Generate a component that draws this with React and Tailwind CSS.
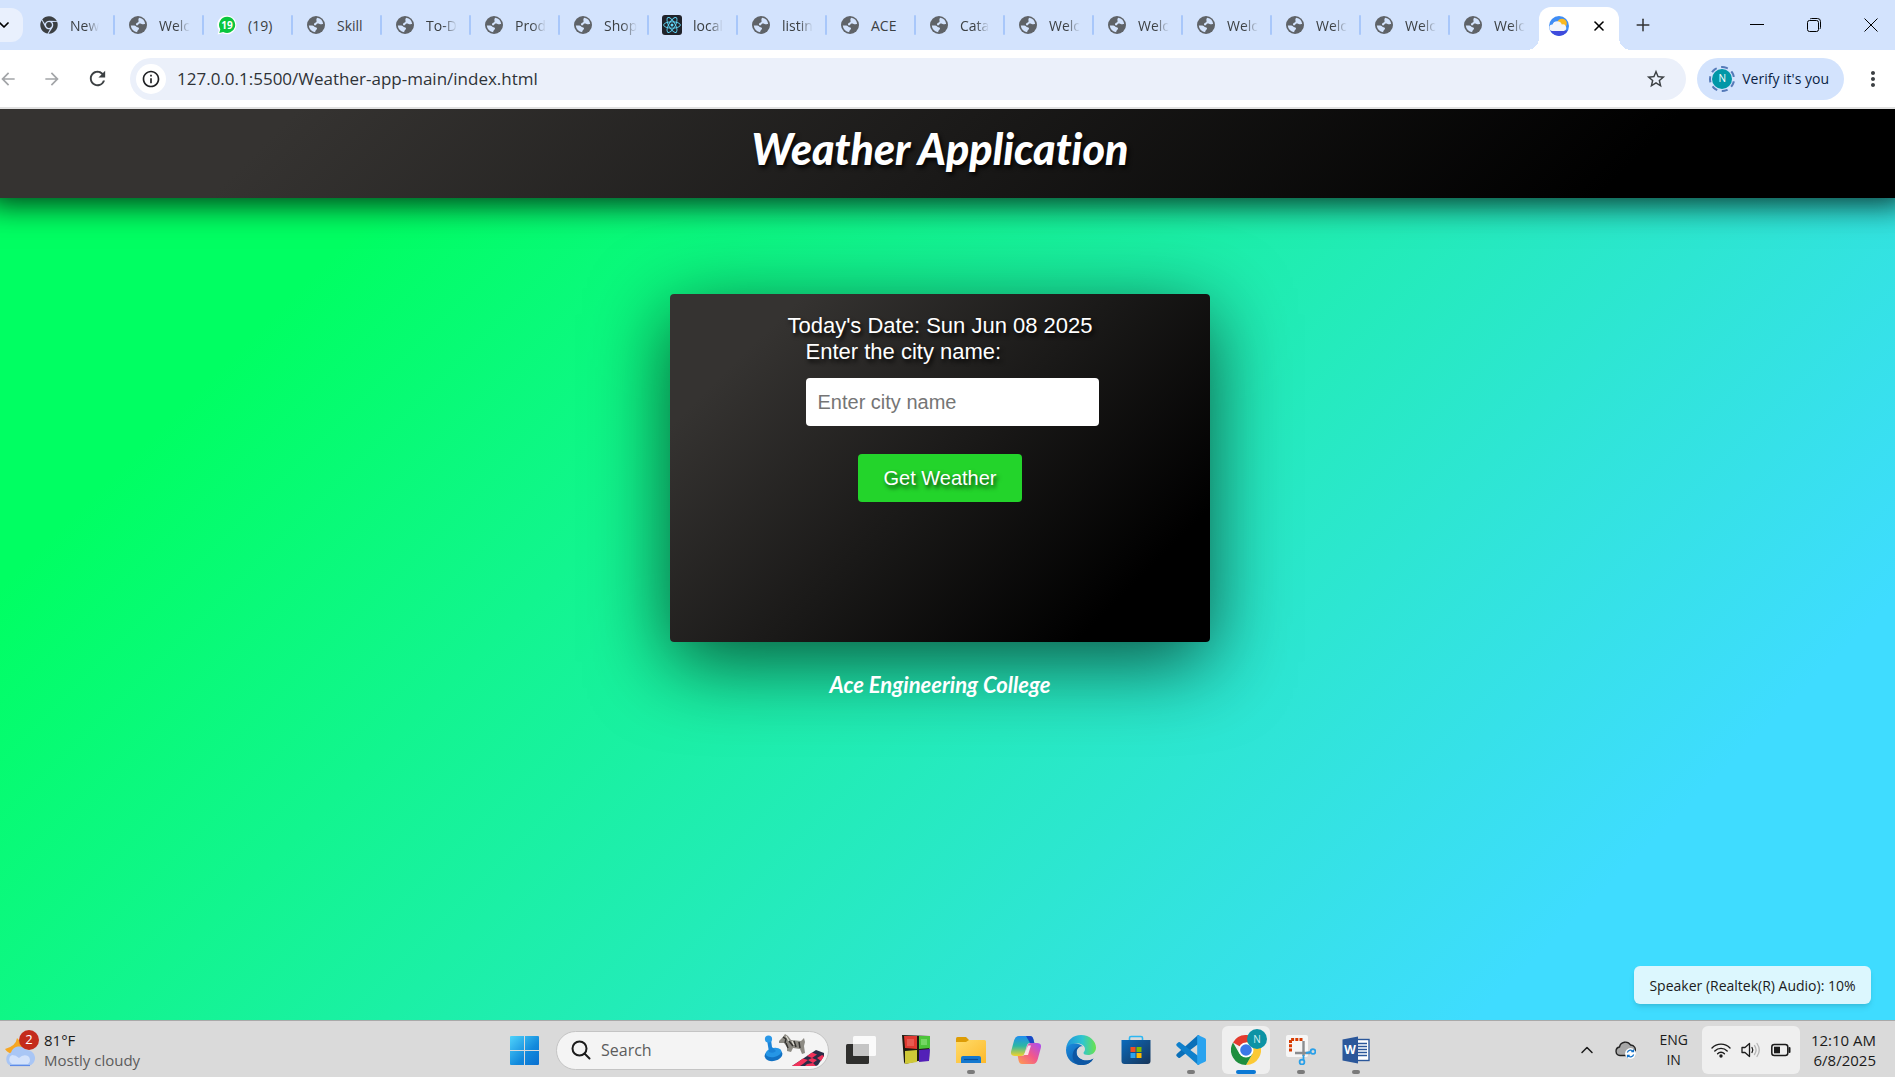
import { MdStarBorder, MdRefresh, MdArrowBack, MdArrowForward, MdInfoOutline, MdMoreVert } from "react-icons/md";
import { FaChrome } from "react-icons/fa";
import { ChevronDown, ChevronUp, X, Plus } from "lucide-react";

const tabs = [
  ["chrome", "New"],
  ["globe", "Welc"],
  ["chat", "(19)"],
  ["globe", "Skill"],
  ["globe", "To-D"],
  ["globe", "Prod"],
  ["globe", "Shop"],
  ["react", "local"],
  ["globe", "listin"],
  ["globe", "ACE"],
  ["globe", "Cata"],
  ["globe", "Welc"],
  ["globe", "Welc"],
  ["globe", "Welc"],
  ["globe", "Welc"],
  ["globe", "Welc"],
  ["globe", "Welc"],
];

const fadedLabels = ["New", "Welc", "To-D", "Prod", "Shop", "local", "listin", "Cata"];

function GlobeIcon() {
  return (
    <svg viewBox="0 0 18 18" className="size-[18px]">
      <circle cx="9" cy="9" r="9" fill="#5f6368" />
      <path d="M10.200 1.800A7.300 7.300 0 0 1 16.200 8.200C15.400 7.600 14.500 8.400 13.300 8.200 12 8 11.600 7.200 10.400 7.600 9.200 8 9.600 9.400 8.200 9.400 7 9.400 6.600 8.200 7.400 7.300 8.200 6.400 9.600 6.600 9.600 5.300 9.600 4.200 8.800 3.400 10.200 1.800z" fill="#d3e3fd" />
      <path d="M1.800 9.400H5.200C6.800 9.400 7.200 11 8.600 11.200 9.800 11.400 10.400 12.200 9.800 13.200 9.200 14.200 8.200 14.200 8.200 16.200A7.300 7.300 0 0 1 1.800 9.400z" fill="#d3e3fd" />
    </svg>
  );
}

function ReactIcon() {
  return (
    <svg viewBox="0 0 20 20" className="size-5">
      <rect width="20" height="20" rx="3" fill="#20232a" />
      <g fill="none" stroke="#61dafb" strokeWidth="0.9">
        <ellipse cx="10" cy="10" rx="8.4" ry="3.2" />
        <ellipse cx="10" cy="10" rx="8.4" ry="3.2" transform="rotate(60 10 10)" />
        <ellipse cx="10" cy="10" rx="8.4" ry="3.2" transform="rotate(120 10 10)" />
      </g>
      <circle cx="10" cy="10" r="1.5" fill="#61dafb" />
    </svg>
  );
}

function ChatIcon() {
  return (
    <span className="relative grid size-5 place-items-center">
      <svg viewBox="0 0 20 20" className="absolute inset-0 size-5">
        <path d="M10 .5a9.4 9.4 0 1 1-4.3 17.8L.6 19.6 1.8 15A9.4 9.4 0 0 1 10 .5z" fill="#fff" />
        <path d="M10.2 1.8a8.1 8.1 0 1 1-4 15.2l-3.900 1 1-3.800A8.100 8.100 0 0 1 10.200 1.800z" fill="#0ac63e" />
      </svg>
      <span className="relative text-[10px] leading-none font-bold text-white">19</span>
    </span>
  );
}

function TabIcon({ kind }) {
  if (kind === "react") return <ReactIcon />;
  if (kind === "chat") return <ChatIcon />;
  if (kind === "chrome") return <FaChrome className="size-[18px] text-[#3c4043]" />;
  return <GlobeIcon />;
}

function WeatherFavicon() {
  return (
    <svg viewBox="0 0 20 20" className="size-5">
      <defs>
        <clipPath id="fav"><circle cx="10" cy="10" r="10" /></clipPath>
      </defs>
      <g clipPath="url(#fav)">
        <rect width="20" height="20" fill="#3f8df5" />
        <rect y="14.5" width="20" height="6" fill="#3f4bdc" />
        <circle cx="13" cy="7.500" r="4.800" fill="#fbb91f" />
        <path d="M3.500 15a3.300 3.300 0 0 1 0-6.600A5 5 0 0 1 12.800 8.500a3.300 3.300 0 0 1 2 6.500z" fill="#f2f5fa" />
      </g>
    </svg>
  );
}

function TabStrip() {
  return (
    <div className="flex h-[50px] items-center overflow-hidden bg-[#d3e3fd] text-[#3c4043]">
      <button aria-label="Search tabs" className="flex h-[34px] w-[23px] shrink-0 items-center rounded-r-xl bg-[#e9f0fd] text-black">
        <ChevronDown className="-ml-1 size-4" strokeWidth={2.6} />
      </button>
      <div className="ml-[3px] flex" role="tablist">
        {tabs.map(([kind, label], i) => (
          <button key={i} role="tab" className="flex h-5 w-[89px] items-center">
            <span className="ml-3 grid w-[22px] place-items-center"><TabIcon kind={kind} /></span>
            <span
              className={
                "ml-2.5 text-left text-[14px] whitespace-nowrap " +
                (fadedLabels.includes(label) ? "mask-[linear-gradient(to_right,black_55%,transparent)]" : "")
              }
            >
              {label}
            </span>
            <span className={i === tabs.length - 1 ? "hidden" : "ml-auto h-5 w-0.5 rounded-full bg-[#a8c7fa]"} />
          </button>
        ))}
      </div>
      <div className="flex items-end self-end">
        <span className="-ml-3 size-3 bg-[radial-gradient(circle_at_top_left,transparent_12px,white_12px)]" />
        <div role="tab" className="flex h-[43px] w-20 items-center justify-between rounded-t-xl bg-white pr-3 pb-1.5 pl-2.5">
          <WeatherFavicon />
          <button aria-label="Close tab" className="text-black"><X className="size-4" strokeWidth={2.4} /></button>
        </div>
        <span className="size-3 bg-[radial-gradient(circle_at_top_right,transparent_12px,white_12px)]" />
      </div>
      <button aria-label="New tab" className="ml-0.5 text-[#333]"><Plus className="size-5" strokeWidth={1.8} /></button>
      <div className="ml-auto flex items-center gap-[43px] pr-[17px] text-black">
        <button aria-label="Minimize">
          <svg viewBox="0 0 14 14" className="size-3.5"><path d="M0 6.500h14" stroke="currentColor" /></svg>
        </button>
        <button aria-label="Restore">
          <svg viewBox="0 0 14 14" className="size-3.5" fill="none" stroke="currentColor">
            <rect x=".5" y="2.500" width="11" height="11" rx="2" />
            <path d="M3 1.200Q3.400.5 4.500.5h6a3 3 0 0 1 3 3v6q0 1-.8 1.600" />
          </svg>
        </button>
        <button aria-label="Close">
          <svg viewBox="0 0 14 14" className="size-3.5"><path d="M.5.5l13 13M13.500.5l-13 13" stroke="currentColor" /></svg>
        </button>
      </div>
    </div>
  );
}

function Toolbar() {
  return (
    <div className="flex h-[59px] items-center border-b-2 border-[#e1e1e1] bg-white text-[#3c4043]">
      <button aria-label="Back" className="-ml-0.5 text-[#a3a5a8]"><MdArrowBack className="size-5" /></button>
      <button aria-label="Forward" className="ml-6 text-[#a3a5a8]"><MdArrowForward className="size-5" /></button>
      <button aria-label="Reload" className="ml-6"><MdRefresh className="size-[23px]" /></button>
      <div className="ml-[21px] flex h-[42px] flex-1 items-center rounded-full bg-[#ebf0fa] pr-[19px] pl-1.5">
        <button aria-label="Site information" className="grid size-[30px] place-items-center rounded-full bg-white text-[#202124]">
          <MdInfoOutline className="size-5" />
        </button>
        <input
          aria-label="Address"
          defaultValue="127.0.0.1:5500/Weather-app-main/index.html"
          className="ml-[11px] flex-1 bg-transparent text-[17px] text-[#2f3337] outline-none"
        />
        <button aria-label="Bookmark this page"><MdStarBorder className="size-[22px]" /></button>
      </div>
      <button className="ml-[11px] flex h-[42px] items-center rounded-full bg-[#d3e3fd] pr-[15px] pl-3 text-[14px] text-[#0b1f45]">
        <span className="mr-[7px] grid size-[26px] place-items-center rounded-full border-2 border-dashed border-[#5479b8]">
          <span className="grid size-5 place-items-center rounded-full bg-[#0097a7] text-[10px] text-white">N</span>
        </span>
        Verify it's you
      </button>
      <button aria-label="Menu" className="mr-2.5 ml-[17px]"><MdMoreVert className="size-6" /></button>
    </div>
  );
}

function WeatherPage() {
  return (
    <main className="relative flex-1 overflow-hidden bg-[linear-gradient(135deg,#00ff62_17%,#3fdcff_85%)] font-['Liberation_Sans',Arial,sans-serif] text-white">
      <header className="flex h-[89px] items-start justify-center bg-[linear-gradient(135deg,#353331_15%,#000_85%)] pt-3.5 pr-[15px] shadow-[0_-8px_30px_14px_rgba(0,0,0,0.8)]">
        <h1 className="font-[Lato,sans-serif] text-[43px] leading-[52px] font-black italic text-shadow-[2px_3px_4px_rgba(0,0,0,0.9)] [font-variant-ligatures:none]">
          Weather Application
        </h1>
      </header>
      <div className="flex flex-col items-center pt-24 pr-[15px]">
        <section className="flex h-[348px] w-[540px] flex-col items-center rounded bg-[linear-gradient(135deg,#353331_15%,#000_85%)] pt-[19px] shadow-[0_20px_80px_rgba(0,0,0,0.65)]">
          <p className="text-[22px] leading-[26px] text-shadow-[2px_3px_4px_rgba(0,0,0,0.9)]">Today's Date: Sun Jun 08 2025</p>
          <div className="ml-6 flex w-[293px] flex-col">
            <label htmlFor="city" className="text-[22px] leading-[26px] text-shadow-[2px_3px_4px_rgba(0,0,0,0.9)]">Enter the city name:</label>
            <input
              id="city"
              placeholder="Enter city name"
              className="mt-[13px] h-12 rounded bg-white px-3 text-[20px] text-black placeholder:text-[#757575]"
            />
          </div>
          <button className="mt-7 h-12 w-[164px] rounded-sm bg-[#23d42b] text-[20px] text-shadow-[2px_3px_4px_rgba(0,0,0,0.7)]">Get Weather</button>
        </section>
        <footer className="mt-[27px] font-[Lato,sans-serif] text-[22px] leading-8 font-bold italic">Ace Engineering College</footer>
      </div>
      <div role="tooltip" className="absolute right-6 bottom-4 flex h-[38px] w-[237px] items-center justify-center rounded-md bg-[#dcf7fe] font-['Open_Sans',sans-serif] text-[14px] text-[#1b1b1b] shadow-md">
        Speaker (Realtek(R) Audio): 10%
      </div>
    </main>
  );
}

function Windows() {
  return (
    <svg viewBox="0 0 29 29" className="size-[29px]">
      <defs>
        <linearGradient id="win" x1="0" y1="0" x2="1" y2="1">
          <stop offset="0" stopColor="#4fd3fb" /><stop offset=".6" stopColor="#1289dc" /><stop offset="1" stopColor="#0a6fd0" />
        </linearGradient>
      </defs>
      <path d="M1 0h13v14H0V1a1 1 0 0 1 1-1zM15 0h13a1 1 0 0 1 1 1v13H15zM0 15h14v14H1a1 1 0 0 1-1-1zM15 15h14v13a1 1 0 0 1-1 1H15z" fill="url(#win)" />
    </svg>
  );
}

function GamePieces() {
  return (
    <svg viewBox="0 0 60 36" className="h-9 w-[60px]">
      <path d="M28 34l24-16 8 3v3l-6 9q-1 1-3 1z" fill="#2b2c47" />
      <path d="M34 30l5-3.500 5 1.500-5 4zM43 24l5-3.500 5 2-5 3.500zM44 28l4-2 5 2-4 3zM28 34l6-4 5 2-3 2zM43 32l6-1 3 3h-11zM53 26l5-3 2 1-3 5z" fill="#f0325a" />
      <ellipse cx="9.500" cy="23" rx="9" ry="6" fill="#1272c4" transform="rotate(-12 9.500 23)" />
      <ellipse cx="9.500" cy="20.500" rx="8" ry="4.500" fill="#2596e6" transform="rotate(-12 9.500 20.500)" />
      <path d="M3 8h4l1 7 4 4q-3 3-7 1z" fill="#1a83d8" />
      <circle cx="4.500" cy="7" r="3.600" fill="#2a98e8" />
      <path d="M15 9l4-4 2-3 3 2 3 4 10 1 3-3 1 4-1 4 1 7-3 1-2-5-7-1-2 4-4-1 0-4-3-4-5 0z" fill="#8d8b84" />
      <path d="M19 5l3 2-1 4M25 9l4 5M30 9l2 6M35 10l1 6M22 11l2 5" fill="none" stroke="#33322f" strokeWidth="1.500" />
      <path d="M22 4l3 5M28 9l2 4" stroke="#dedcd3" strokeWidth="1.200" />
    </svg>
  );
}

function TaskView() {
  return (
    <svg viewBox="0 0 30 30" className="size-[30px]">
      <rect y="9" width="23" height="20" rx="1.500" fill="#2f2f2d" />
      <rect x="7" y="1" width="23" height="20" rx="1.500" fill="#fff" fillOpacity=".85" />
      <path d="M7 9h16v12H8.500A1.500 1.500 0 0 1 7 19.500z" fill="#c5c5c5" />
    </svg>
  );
}

function ColorBlocks() {
  return (
    <svg viewBox="0 0 30 30" className="size-[30px]">
      <path d="M1 0l28 1-1 24-11 1-13 3-1-2z" fill="#1d1a10" />
      <path d="M3 1h13v13l-12-1z" fill="#df3a31" /><path d="M18 1h11v12l-11 1z" fill="#4cc43a" />
      <path d="M4 16l12-1v12l-12 2z" fill="#cfc838" /><path d="M18 15l11-1-1 12-10 1z" fill="#5320b8" />
      <path d="M6 4h7v7H6z" fill="#f07a70" opacity=".5" /><path d="M20 4h6v6h-6z" fill="#9be88c" opacity=".5" />
    </svg>
  );
}

function Explorer() {
  return (
    <svg viewBox="0 0 30 30" className="size-[30px]">
      <defs>
        <linearGradient id="fold" x1="0" y1="0" x2="1" y2="1"><stop stopColor="#ffdb6a" /><stop offset="1" stopColor="#fdb92a" /></linearGradient>
      </defs>
      <path d="M0 3.500Q0 2 1.500 2H10l3 3v5H0z" fill="#dd9c05" />
      <path d="M0 7h10l3-2h15.500A1.500 1.500 0 0 1 30 6.500V28H0z" fill="url(#fold)" />
      <path d="M5 28v-5q0-2 2-2h16q2 0 2 2v5z" fill="#1478cf" />
      <path d="M8 24.500h14" stroke="#0a4f99" strokeWidth="1.200" />
    </svg>
  );
}

function Copilot() {
  return (
    <svg viewBox="0 0 30 30" className="size-[30px]">
      <defs>
        <linearGradient id="cpa" x1="0" y1="0" x2="0" y2="1"><stop stopColor="#1f8df0" /><stop offset=".5" stopColor="#2cb7a4" /><stop offset="1" stopColor="#f2d22c" /></linearGradient>
        <linearGradient id="cpb" x1="1" y1="0" x2="0" y2="1"><stop stopColor="#a64df5" /><stop offset=".5" stopColor="#f2588a" /><stop offset="1" stopColor="#ffa04d" /></linearGradient>
      </defs>
      <path d="M8 1h11q2.500 0 3.300 3l1 4H19q-2.500 0-3.300 3l-2 7q-1 3-3.700 3H4q-5 0-3.800-5l3-11Q4.500 1 8 1z" fill="url(#cpa)" />
      <path d="M15 1h4q2.500 0 3.300 3l1 4H19z" fill="#1a47c4" />
      <path d="M22 29H11q-2.500 0-3.300-3l-1-5H11q2.500 0 3.300-3l2-7q1-3 3.700-3h6q5 0 3.800 5l-3 11q-1.300 5-4.800 5z" fill="url(#cpb)" />
      <path d="M17 10.500h3l-3 9.500h-4z" fill="#fff" fillOpacity=".8" />
    </svg>
  );
}

function Edge() {
  return (
    <svg viewBox="0 0 30 30" className="size-[30px]">
      <defs>
        <linearGradient id="eda" x1="0" y1=".3" x2="1" y2=".3"><stop stopColor="#1f93dc" /><stop offset=".55" stopColor="#2fc5d0" /><stop offset="1" stopColor="#6ae34c" /></linearGradient>
        <linearGradient id="edb" x1="0" y1="0" x2="1" y2="1"><stop stopColor="#1a8ce0" /><stop offset="1" stopColor="#0a4a95" /></linearGradient>
      </defs>
      <path d="M0 14C1 5 7 0 15 0c9 0 15 6.500 15 12.500 0 5-4 7.500-8 7.500-3 0-4.500-1-4.500-2s1.500-1.500 1.500-4c0-3-3-5.500-7.500-5.500C6 8.500 1.500 11 0 14z" fill="url(#eda)" />
      <path d="M0 15c0-4 5-7 10-6.500 3 .3 5.500 1.500 7 3-2.500-1-6.500 1-6.500 5.500 0 6 6 9 11 8.500 3-.3 4.500-1 6-2C25 28 20.500 30 15 30 6.500 30 0 23.500 0 15z" fill="url(#edb)" />
      <path d="M13 29.800C8 28 5.500 23 7 18c1-4 4-6.500 8-7-3 1.500-4.500 3.500-4.500 6.500 0 5.500 6 8.500 11 8 3-.3 4.500-1 6-2-3 5-8.500 7.500-14.500 6.300z" fill="#0d57a4" />
    </svg>
  );
}

function Store() {
  return (
    <svg viewBox="0 0 30 30" className="size-[30px]">
      <defs>
        <linearGradient id="sto" x1="0" y1="0" x2="1" y2="1"><stop stopColor="#0c6bbd" /><stop offset="1" stopColor="#173559" /></linearGradient>
      </defs>
      <path d="M8.500 6V3q0-1.500 1.500-1.500h10q1.500 0 1.500 1.500v3" fill="none" stroke="#2eb7f2" strokeWidth="1.600" />
      <path d="M.5 5h29v21q0 3-3 3h-23q-3 0-3-3z" fill="url(#sto)" />
      <path d="M9.500 12h5v5h-5z" fill="#f25022" /><path d="M15.500 12h5v5h-5z" fill="#7fba00" />
      <path d="M9.500 18h5v5h-5z" fill="#2ba4ee" /><path d="M15.500 18h5v5h-5z" fill="#ffb900" />
    </svg>
  );
}

function VSCode() {
  return (
    <svg viewBox="0 0 30 30" className="size-[30px]">
      <path d="M1 18.800L21.500.4q.8-.6 1.700-.2v8L4 22.700q-.8.600-1.600 0L.7 21.200q-1-1.200.3-2.400z" fill="#0a6fb8" />
      <path d="M1 11.200L21.500 29.600q.8.600 1.700.2v-8L4 7.300q-.8-.6-1.600 0L.7 8.800q-1 1.200.3 2.400z" fill="#0f80cc" />
      <path d="M22 0l7 3.200q1 .5 1 1.600v20.400q0 1.100-1 1.600L22 30q-.8-.1-.8-1.500v-27Q21.200.1 22 0z" fill="#2aa3ef" />
    </svg>
  );
}

function Chrome() {
  return (
    <span className="relative">
      <svg viewBox="0 0 30 30" className="size-[30px]">
        <path d="M15 15L2 7.500A15 15 0 0 1 28 7.500H15z" fill="#e33b2e" />
        <path d="M15 15V7.500h13A15 15 0 0 1 15 30l6.500-11.300z" fill="#fcc934" />
        <path d="M15 15l6.500 3.700L15 30A15 15 0 0 1 2 7.500l6.500 11.200z" fill="#1e8e3e" />
        <circle cx="15" cy="15" r="7.500" fill="#fff" /><circle cx="15" cy="15" r="5.800" fill="#3b78e7" />
      </svg>
      <span className="absolute -top-1.5 -right-1.5 grid size-5 place-items-center rounded-full bg-[#0d93a5] text-[10px] text-[#d3eff2]">N</span>
    </span>
  );
}

function Snip() {
  return (
    <svg viewBox="0 0 30 30" className="size-[30px]">
      <rect width="22" height="22" rx="2" fill="#f6f6f6" />
      <path d="M4.500 16.500V4.500h12" fill="none" stroke="#d83b01" strokeWidth="3" strokeDasharray="3 1.200" />
      <path d="M17.500 6v15M9 18h15" stroke="#8a8d90" strokeWidth="2.400" />
      <circle cx="27" cy="16.500" r="2.400" fill="none" stroke="#2ba0e8" strokeWidth="1.800" />
      <circle cx="16" cy="27" r="2.400" fill="none" stroke="#2ba0e8" strokeWidth="1.800" />
      <path d="M17.500 20v5M20 18l5-1" stroke="#2ba0e8" strokeWidth="1.800" />
    </svg>
  );
}

function Word() {
  return (
    <span className="relative grid size-[30px] place-items-center">
      <svg viewBox="0 0 30 30" className="absolute inset-0 size-[30px]">
        <rect x="14" y="4.500" width="14" height="21" fill="#fff" stroke="#2b579a" strokeWidth="1.400" />
        <path d="M17 8.500h9M17 11.500h9M17 14.500h9M17 17.500h9M17 20.500h9" stroke="#2b579a" strokeWidth="1.500" />
        <path d="M1.500 4.500L17 1.500v27l-15.500-3z" fill="#2b579a" />
      </svg>
      <span className="relative mr-3 text-[12px] leading-none font-bold text-white">W</span>
    </span>
  );
}

const apps = [
  ["Task view", TaskView, ""],
  ["Blocks", ColorBlocks, ""],
  ["File Explorer", Explorer, "dot"],
  ["Copilot", Copilot, ""],
  ["Edge", Edge, ""],
  ["Store", Store, ""],
  ["Visual Studio Code", VSCode, "dot"],
  ["Chrome", Chrome, "active"],
  ["Snipping Tool", Snip, "dot"],
  ["Word", Word, "dot"],
];

function Taskbar() {
  return (
    <div className="grid h-[57px] grid-cols-[1fr_auto_1fr] items-center border-t border-[#a9a9a9] bg-[#dadada] pt-0.5 text-[15px] text-[#1b1b1b]">
      <button className="flex items-center gap-[9px] pl-[5px] text-left">
        <span className="relative">
          <svg viewBox="0 0 30 36" className="h-9 w-[30px]">
            <path d="M12 6q-1 8-12 11 3 5 8 4l9-5V8q-3 1-5-2z" fill="#f6a623" />
            <path d="M7 34a7 7 0 0 1-1-13.500A8.500 8.500 0 0 1 21 18a8 8 0 0 1 2 16z" fill="#a9c6f5" />
            <path d="M7 32a5 5 0 0 1 0-9q4 0 7 3 4-4 9-2a5 5 0 0 1 0 8z" fill="#d3e2fb" />
            <path d="M5 33.500h20" stroke="#5d8be8" strokeWidth="1.200" />
          </svg>
          <span className="absolute -top-0.5 -right-1 grid size-5 place-items-center rounded-full bg-[#c42b1c] text-[13px] text-white">2</span>
        </span>
        <span className="leading-5">
          81°F<br /><span className="text-[#5c5c5c]">Mostly cloudy</span>
        </span>
      </button>
      <div className="mr-[15px] flex items-center">
        <button aria-label="Start" className="grid size-12 place-items-center"><Windows /></button>
        <label className="mx-2 flex h-[39px] w-[273px] items-center rounded-full border border-[#c4c4c4] bg-[#f4f4f4] pr-1 pl-3.5">
          <svg viewBox="0 0 20 20" className="size-5 shrink-0" fill="none" stroke="#1b1b1b" strokeWidth="2">
            <circle cx="8.500" cy="8.500" r="7" /><path d="M13.500 13.500l5 5" strokeLinecap="round" />
          </svg>
          <input aria-label="Search" placeholder="Search" className="ml-2.5 w-0 flex-1 text-[16px] placeholder:text-[#5c5c5c]" />
          <GamePieces />
        </label>
        <div className="flex gap-[7px]">
          {apps.map(([name, Icon, state]) => (
            <button
              key={name}
              aria-label={name}
              className={"relative grid size-12 place-items-center rounded-md " + (state === "active" ? "bg-[#efefef]" : "")}
            >
              <Icon />
              {state === "dot" && <span className="absolute bottom-0 h-1 w-2 rounded-full bg-[#7a7a7a]" />}
              {state === "active" && <span className="absolute bottom-0 h-1 w-5 rounded-full bg-[#0a78d4]" />}
            </button>
          ))}
        </div>
      </div>
      <div className="flex items-center justify-end pr-[19px] text-center leading-5">
        <button aria-label="Show hidden icons"><ChevronUp className="size-5" strokeWidth={1.8} /></button>
        <svg viewBox="0 0 22 18" className="ml-[18px] h-[18px] w-[22px]">
          <path d="M5 14.500a4.300 4.300 0 0 1-.5-8.500A6 6 0 0 1 15.500 4a4.500 4.500 0 0 1 4 7v3.500z" fill="#a7a7a7" stroke="#222" strokeWidth="1.400" />
          <circle cx="15.500" cy="12.500" r="5.400" fill="#fff" />
          <path d="M12.300 11.500a3.400 3.400 0 0 1 6-1M18.700 13.500a3.400 3.400 0 0 1-6 1M18.500 8.500v2.200h-2.200M12.500 16.500v-2.200h2.200" fill="none" stroke="#1272c9" strokeWidth="1.200" />
        </svg>
        <button className="ml-[22px] text-[14px] leading-5">ENG<br />IN</button>
        <button aria-label="Network, volume and battery" className="ml-3.5 flex h-12 items-center gap-2.5 rounded-md bg-[#efefef] px-[9px]">
          <svg viewBox="0 0 20 16" className="h-4 w-5" fill="none" stroke="#1b1b1b" strokeWidth="1.400" strokeLinecap="round">
            <path d="M1 6a12.500 12.500 0 0 1 18 0M3.800 9a8.600 8.600 0 0 1 12.400 0M6.600 11.700a4.800 4.800 0 0 1 6.800 0" />
            <circle cx="10" cy="14" r="1" fill="#1b1b1b" />
          </svg>
          <svg viewBox="0 0 20 16" className="h-4 w-5" fill="none" stroke="#1b1b1b" strokeWidth="1.300" strokeLinejoin="round" strokeLinecap="round">
            <path d="M1 5.500h3L8.500 1.500v13L4 10.500H1zM11 5.500q1.600 2.500 0 5" />
            <path d="M13.500 3.500q3.200 4.500 0 9M16 1.500q4.500 6.500 0 13" stroke="#b5b5b5" />
          </svg>
          <svg viewBox="0 0 20 14" className="h-3.5 w-5" fill="none" stroke="#1b1b1b" strokeWidth="1.500">
            <rect x=".8" y="1.500" width="16" height="11" rx="2.500" /><path d="M3 3.700h6v6.600H3z" fill="#1b1b1b" stroke="none" />
            <path d="M18.500 5v4" strokeWidth="2" strokeLinecap="round" />
          </svg>
        </button>
        <button className="ml-[11px] text-right">12:10 AM<br />6/8/2025</button>
      </div>
    </div>
  );
}

export default function App() {
  return (
    <div className="flex min-h-screen flex-col font-['Open_Sans','Noto_Sans',sans-serif]">
      <TabStrip />
      <Toolbar />
      <WeatherPage />
      <Taskbar />
    </div>
  );
}
